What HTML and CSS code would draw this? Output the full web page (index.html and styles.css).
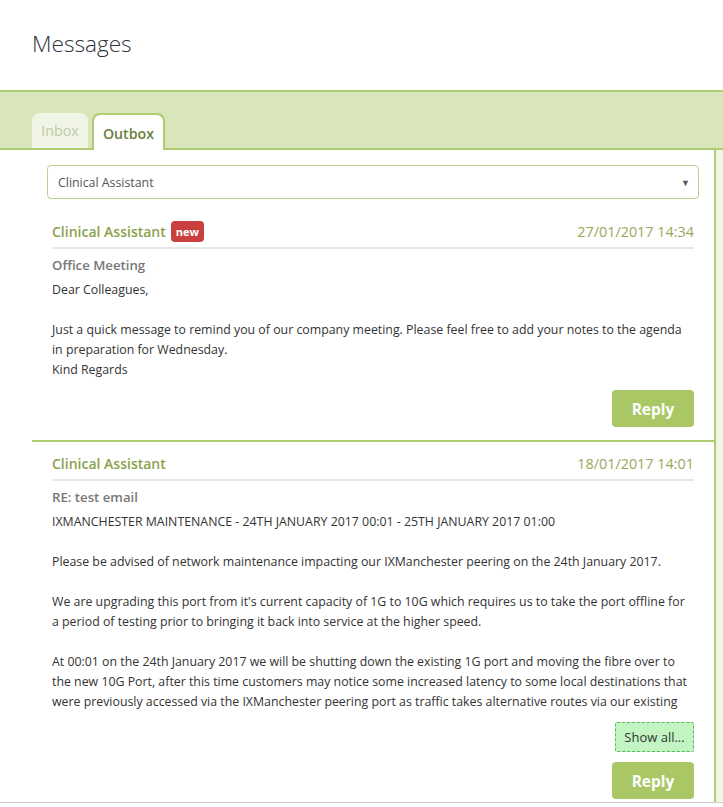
FILE: index.html
```html
<!DOCTYPE html>
<html lang="en">
<head>
    <meta charset="UTF-8">
    <meta name="viewport" content="width=device-width, initial-scale=1.0">
    <title>Messages</title>
    <link rel="stylesheet" href="styles.css">
</head>
<body>
    <h1 class="page-title">Messages</h1>

    <div class="tab-band">
        <div class="tab">Inbox</div>
        <div class="tab tab-active">Outbox</div>
    </div>

    <div class="main">
        <div class="panel">
            <div class="select-box">
                <select class="recipient">
                    <option>Clinical Assistant</option>
                </select>
            </div>

            <div class="message">
                <div class="msg-head">
                    <div class="sender">Clinical Assistant <span class="badge">new</span></div>
                    <div class="date">27/01/2017 14:34</div>
                </div>
                <div class="subject">Office Meeting</div>
                <div class="body">
                    <p>Dear Colleagues,</p>
                    <p>&nbsp;</p>
                    <p>Just a quick message to remind you of our company meeting. Please feel free to add your notes to the agenda in preparation for Wednesday.</p>
                    <p>Kind Regards</p>
                </div>
                <div class="actions">
                    <button class="btn-reply">Reply</button>
                </div>
            </div>

            <div class="message">
                <div class="msg-head">
                    <div class="sender">Clinical Assistant</div>
                    <div class="date">18/01/2017 14:01</div>
                </div>
                <div class="subject">RE: test email</div>
                <div class="body body-clipped">
                    <p>IXMANCHESTER MAINTENANCE - 24TH JANUARY 2017 00:01 - 25TH JANUARY 2017 01:00</p>
                    <p>&nbsp;</p>
                    <p>Please be advised of network maintenance impacting our IXManchester peering on the 24th January 2017.</p>
                    <p>&nbsp;</p>
                    <p>We are upgrading this port from it's current capacity of 1G to 10G which requires us to take the port offline for a period of testing prior to bringing it back into service at the higher speed.</p>
                    <p>&nbsp;</p>
                    <p>At 00:01 on the 24th January 2017 we will be shutting down the existing 1G port and moving the fibre over to the new 10G Port, after this time customers may notice some increased latency to some local destinations that were previously accessed via the IXManchester peering port as traffic takes alternative routes via our existing transit providers.</p>
                </div>
                <div class="actions">
                    <button class="btn-more">Show all...</button>
                    <button class="btn-reply">Reply</button>
                </div>
            </div>
        </div>
        <div class="rail"></div>
    </div>

    <div class="footer"></div>
</body>
</html>
```

FILE: styles.css
```css
body {
    margin: 0;
    padding: 0;
    font-family: "Open Sans", "Noto Sans", sans-serif;
    font-size: 12.35px;
    color: #333;
    background: #fff;
}
.page-title {
    margin: 0;
    height: 90px;
    box-sizing: border-box;
    padding: 28px 0 0 32px;
    font-size: 22.6px;
    line-height: 32px;
    font-weight: 300;
    color: #2f3440;
}
.tab-band {
    display: flex;
    align-items: flex-end;
    gap: 4px;
    padding: 21px 0 0 32px;
    background: #d9e5bb;
    border-top: 2px solid #b0cc72;
    border-bottom: 2px solid #b0cc72;
}
.tab {
    width: 56px;
    height: 35px;
    box-sizing: border-box;
    line-height: 35px;
    text-align: center;
    font-size: 14.2px;
    color: #bdc9a6;
    background: #f1f5e6;
    border-radius: 8px 8px 0 0;
}
.tab-active {
    width: 73px;
    height: 37px;
    margin-bottom: -2px;
    line-height: 37px;
    font-weight: 600;
    color: #6b803c;
    background: #fff;
    border: 2px solid #b0cc72;
    border-bottom: none;
}
.main {
    display: flex;
}
.panel {
    flex: 1;
    margin-left: 32px;
    border-right: 2px solid #b0cc72;
    background: #fff;
}
.rail {
    width: 7px;
    background: #f1f5e6;
}
.select-box {
    position: relative;
    margin: 15px 15px 11px;
}
.select-box::after {
    content: "\25BC";
    position: absolute;
    right: 9px;
    top: 11px;
    font-size: 9px;
    color: #555;
    pointer-events: none;
}
.recipient {
    display: block;
    width: 100%;
    height: 34px;
    padding: 0 10px;
    font-family: inherit;
    font-size: 12.35px;
    color: #555;
    background: #fff;
    border: 1px solid #b8d38b;
    border-radius: 4px;
    appearance: none;
    -webkit-appearance: none;
}
.message {
    padding: 10px 20px 13px;
    border-bottom: 2px solid #b0cc72;
}
.message:last-child {
    border-bottom: none;
    padding-bottom: 3px;
}
.msg-head {
    display: flex;
    justify-content: space-between;
    align-items: center;
    height: 22px;
    padding-bottom: 5px;
    border-bottom: 2px solid #e8e8e8;
}
.sender {
    display: flex;
    align-items: center;
    gap: 5px;
    font-size: 14px;
    font-weight: 600;
    color: #8aa14b;
}
.badge {
    display: inline-block;
    height: 21px;
    padding: 0 5px;
    line-height: 21px;
    font-size: 11px;
    font-weight: 700;
    color: #fff;
    background: #c9403f;
    border-radius: 4px;
}
.date {
    font-size: 14.4px;
    color: #9ba75b;
}
.subject {
    margin-top: 6px;
    font-size: 13.2px;
    line-height: 20px;
    font-weight: 600;
    color: #777;
}
.body {
    margin-top: 5px;
    line-height: 20px;
}
.body p {
    margin: 0;
}
.body-clipped {
    max-height: 200px;
    overflow: hidden;
}
.actions {
    display: flex;
    flex-direction: column;
    align-items: flex-end;
    gap: 10px;
    margin-top: 10px;
}
.btn-reply {
    width: 82px;
    height: 37px;
    font-family: inherit;
    font-size: 15.5px;
    font-weight: 700;
    color: #fff;
    background: #a9c764;
    border: none;
    border-radius: 4px;
}
.btn-more {
    width: 79px;
    height: 30px;
    padding: 0;
    font-family: inherit;
    font-size: 13px;
    color: #333;
    background: #c2f5c2;
    border: 1px dashed #5cb85c;
    border-radius: 2px;
}
.footer {
    height: 40px;
    border-top: 1px solid #ccc;
}
```
